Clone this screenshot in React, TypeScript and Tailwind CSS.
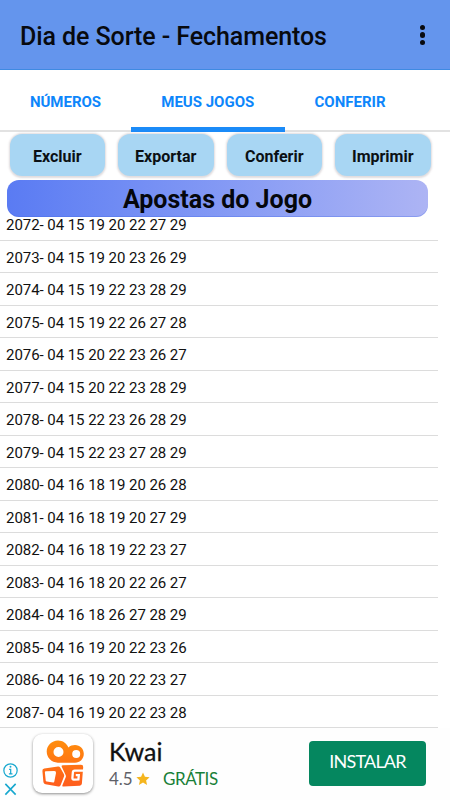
const games = [
  '2072- 04 15 19 20 22 27 29',
  '2073- 04 15 19 20 23 26 29',
  '2074- 04 15 19 22 23 28 29',
  '2075- 04 15 19 22 26 27 28',
  '2076- 04 15 20 22 23 26 27',
  '2077- 04 15 20 22 23 28 29',
  '2078- 04 15 22 23 26 28 29',
  '2079- 04 15 22 23 27 28 29',
  '2080- 04 16 18 19 20 26 28',
  '2081- 04 16 18 19 20 27 29',
  '2082- 04 16 18 19 22 23 27',
  '2083- 04 16 18 20 22 26 27',
  '2084- 04 16 18 26 27 28 29',
  '2085- 04 16 19 20 22 23 26',
  '2086- 04 16 19 20 22 23 27',
  '2087- 04 16 19 20 22 23 28',
];

const actions = ['Excluir', 'Exportar', 'Conferir', 'Imprimir'];

function Header() {
  return (
    <header className="flex h-[70px] shrink-0 items-center justify-between border-b border-[#3f8ae2] bg-[#6495ed] pl-5 pr-[25px] pt-[3px]">
      <h1 className="whitespace-nowrap pt-[2px] text-[25px] font-medium leading-8 tracking-[-0.08px] text-[#080a0f]">Dia de Sorte - Fechamentos</h1>
      <div className="-mt-[2px] flex flex-col gap-[2.4px]">
        <span className="size-[5.2px] rounded-full bg-[#080a0f]" />
        <span className="size-[5.2px] rounded-full bg-[#080a0f]" />
        <span className="size-[5.2px] rounded-full bg-[#080a0f]" />
      </div>
    </header>
  );
}

function Tabs() {
  return (
    <nav className="flex h-[62px] shrink-0 items-stretch bg-[linear-gradient(#e2e2e2,#e2e2e2)] bg-[length:100%_2px] bg-bottom bg-no-repeat text-[15px] font-bold leading-[64px] text-[#0d86fb]">
      <div className="w-[131px] text-center">NÚMEROS</div>
      <div className="w-[153.5px] border-b-[5px] border-[#1b8bf8] text-center">MEUS JOGOS</div>
      <div className="w-[131px] text-center">CONFERIR</div>
    </nav>
  );
}

function KwaiLogo() {
  return (
    <svg viewBox="0 0 60 60" className="size-[60px]" fill="none">
      <defs>
        <linearGradient id="kwai" x1="30" y1="5" x2="30" y2="55" gradientUnits="userSpaceOnUse">
          <stop stopColor="#ff8f0c" />
          <stop offset="1" stopColor="#ff5a1f" />
        </linearGradient>
      </defs>
      <g fill="url(#kwai)" fillRule="evenodd">
        <path d="M25 6.500c4.800 0 8.800 2.800 10.400 7 1.900-1.600 4.100-2.400 6.600-2.400 5 0 8.800 3.900 8.800 8.700 0 5.200-3.800 8.900-8.800 8.900H24.800C18.600 28.700 13.700 23.600 13.700 17.600 13.700 11.500 18.700 6.500 25 6.500ZM25.500 13a5 5 0 1 0 0 10 5 5 0 0 0 0-10ZM43.200 16.100a4 4 0 1 0 0 8 4 4 0 0 0 0-8Z" />
        <path d="M11.300 34.500 25 32.600q1.500-.2 2.300 1.100l3.500 6.200q.7 1.200.3 2.400l-3.400 8.700q-.7 1.700-2.400 1.500l-12.800-2.200q-1.900-.3-2.100-2.300L9.400 37q-.2-2.200 1.900-2.500ZM12.800 37.300q-1 .1-.9 1.200l.8 7.900q.1 1 1.100 1.200l6.400.9q1 .1 1.100-.9l1.700-8.700q.3-2-1.700-2Z" />
        <path d="M28.700 32.700q-.7-1.400 1-1.500l18.300-.4q2.400 0 2.200 2.200l-1.300 16.600q-.2 2-2.200 2.100L30.200 52.600q-1.400.1-.8-1.400l3.400-8.200q.4-1-.2-2.100Z" />
      </g>
      <path d="M50 36.600h-8.300q-1.700 0-1.800 1.500l-.5 5.800q-.1 1.800 1.500 1.700l4.500-.2.400-4.300h-3" stroke="white" strokeWidth="2.300" />
    </svg>
  );
}

function AdBanner() {
  return (
    <footer className="flex h-[72px] shrink-0 items-start bg-[#fefefe]">
      <div className="flex w-[33px] flex-col gap-[4px] pl-[3px] pt-[35px] text-[#18a8cf]">
        <svg viewBox="0 0 16 16" className="size-[15px]" fill="none" stroke="currentColor">
          <circle cx="8" cy="8" r="7.1" strokeWidth="1.3" />
          <path d="M6.500 6.700h1.700v4.600M6.300 11.500h3.800" strokeWidth="1.300" />
          <circle cx="8" cy="4" r="1" fill="currentColor" stroke="none" />
        </svg>
        <svg viewBox="0 0 16 16" className="size-[15px]" stroke="currentColor" strokeWidth="1.7">
          <path d="m2.500 2 11 11.500M13.500 2 2.500 13.500" />
        </svg>
      </div>
      <div className="mt-[6px] h-[59px] w-[60px] rounded-[9px] bg-white shadow-[0_1px_3px_rgba(0,0,0,0.45)]">
        <KwaiLogo />
      </div>
      <div className="w-[216px] pl-4 pt-[7px]">
        <div className="font-['Lato',sans-serif] text-[25px] font-normal leading-8 text-[#111] [-webkit-text-stroke:0.3px_#111]">Kwai</div>
        <div className="flex h-5 items-center pt-[3px] font-['Lato',sans-serif] text-[17px] leading-5">
          <span className="w-[27px] text-[#5f6068]">4.5</span>
          <svg viewBox="0 0 24 24" className="size-[14px]" fill="#f5b51e">
            <path d="m12 1 3.3 7.3 8 .8-6 5.3 1.7 7.9-7-4.1-7 4.1 1.7-7.9-6-5.3 8-.8z" />
          </svg>
          <span className="ml-[13px] tracking-[-0.45px] text-[#188038]">GRÁTIS</span>
        </div>
      </div>
      <button className="mt-[13px] h-[45px] w-[117px] rounded-[4px] bg-[#05875f] pb-[5px] font-['Lato',sans-serif] text-[18px] leading-5 tracking-[-0.8px] text-white">INSTALAR</button>
    </footer>
  );
}

export default function App() {
  return (
    <div className="flex h-[800px] w-[450px] flex-col overflow-hidden bg-white font-['Roboto',sans-serif]">
      <Header />
      <Tabs />
      <div className="flex shrink-0 gap-[13px] pl-[9.5px] pt-[1.5px]">
        {actions.map((label) => (
          <button key={label} className="h-[42.5px] w-[95.500px] rounded-[12px] bg-[#a8d6f3] pt-[5px] text-[16px] font-bold leading-5 text-[#0b1014] shadow-[0_0.5px_2px_1px_rgba(100,80,90,0.2)]">
            {label}
          </button>
        ))}
      </div>
      <h2 className="ml-[7px] mt-1 h-[37px] w-[421px] shrink-0 rounded-[12px] bg-linear-to-r from-[#5a7bf3] to-[#adb4f4] text-center text-[25px] font-bold leading-[40px] text-[#05070c] shadow-[inset_0_-1px_0_rgba(60,100,230,0.3)]">
        Apostas do Jogo
      </h2>
      <div className="-mt-[9px] flex w-[437.5px] shrink-0 flex-col">
        {games.map((game) => (
          <div key={game} className="h-[32.5px] shrink-0 whitespace-pre border-b border-[#dcdcdc] pl-[6px] text-[15px] leading-[34px] tracking-[-0.05px] text-[#111]">
            {game}
          </div>
        ))}
      </div>
      <AdBanner />
    </div>
  );
}
